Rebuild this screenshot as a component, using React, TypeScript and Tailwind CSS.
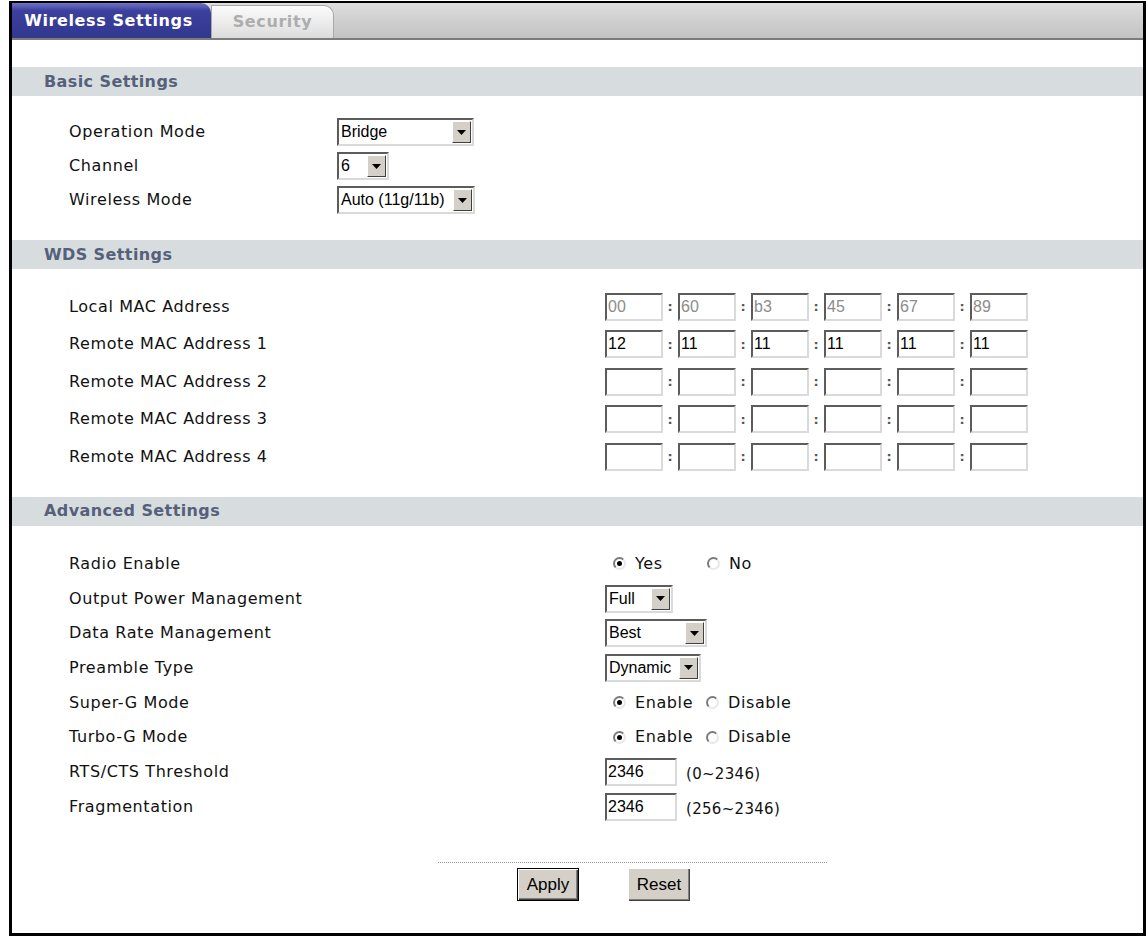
import React from "react";

const verdana = "font-['DejaVu_Sans',Verdana,sans-serif]";
const arial = "font-['Liberation_Sans',Arial,sans-serif]";

function Select({ value, className }: { value: string; className: string }) {
  return (
    <div
      className={`flex h-[28px] border-2 border-t-[#5c5c5c] border-l-[#5c5c5c] border-b-[#dadada] border-r-[#dadada] bg-white ${className}`}
    >
      <span className={`flex-1 pl-[2px] text-[16px] leading-[24px] tracking-normal text-black ${arial}`}>{value}</span>
      <span className="my-[1px] mr-[1px] flex w-[19px] items-center justify-center border border-t-white border-l-white border-b-[#404040] border-r-[#404040] bg-[#d4d0c8]">
        <svg width="9" height="5" viewBox="0 0 9 5">
          <path d="M0 0h9L4.5 5z" fill="#000" />
        </svg>
      </span>
    </div>
  );
}

function TextBox({ value = "", muted = false, className }: { value?: string; muted?: boolean; className: string }) {
  return (
    <div
      className={`h-[28px] border-2 border-t-[#5c5c5c] border-l-[#5c5c5c] border-b-[#dadada] border-r-[#dadada] bg-white pl-[1px] text-[16px] leading-[24px] tracking-normal ${arial} ${
        muted ? "text-[#8c8c8c]" : "text-black"
      } ${className}`}
    >
      {value}
    </div>
  );
}

function Radio({ checked }: { checked?: boolean }) {
  return (
    <span className="flex h-[13px] w-[13px] shrink-0 items-center justify-center rounded-full border-2 border-t-[#7a7a7a] border-l-[#7a7a7a] border-b-[#e8e8e8] border-r-[#e8e8e8] bg-white">
      {checked && <span className="h-[5px] w-[5px] rounded-full bg-black" />}
    </span>
  );
}

function RadioOption({ label, checked, className = "" }: { label: string; checked?: boolean; className?: string }) {
  return (
    <span className={`flex items-center ${className}`}>
      <Radio checked={checked} />
      <span className="ml-[9px]">{label}</span>
    </span>
  );
}

function SectionHeader({ title }: { title: string }) {
  return (
    <div
      className={`flex h-[29px] items-center bg-[#d7dddf] pl-[32px] text-[16px] font-bold tracking-[0.4px] text-[#56607a] ${verdana}`}
    >
      {title}
    </div>
  );
}

function MacRow({ values = [], muted = false }: { values?: string[]; muted?: boolean }) {
  return (
    <div className="flex items-center">
      {[0, 1, 2, 3, 4, 5].map((i) => (
        <React.Fragment key={i}>
          {i > 0 && <span className={`w-[15px] text-center text-[13px] font-bold text-[#555] ${verdana}`}>:</span>}
          <TextBox value={values[i]} muted={muted} className="w-[58px]" />
        </React.Fragment>
      ))}
    </div>
  );
}

const macRows: { label: string; values?: string[]; muted?: boolean }[] = [
  { label: "Local MAC Address", values: ["00", "60", "b3", "45", "67", "89"], muted: true },
  { label: "Remote MAC Address 1", values: ["12", "11", "11", "11", "11", "11"] },
  { label: "Remote MAC Address 2" },
  { label: "Remote MAC Address 3" },
  { label: "Remote MAC Address 4" },
];

export default function App() {
  return (
    <div className={`h-[939px] w-[1148px] bg-white pl-[9px] pt-[1px] text-[16px] tracking-[0.6px] text-[#111] ${verdana}`}>
      <div className="flex h-[935px] w-[1137px] flex-col border-t-2 border-l-[3px] border-r-[3px] border-b-[3px] border-black">
        {/* tab strip */}
        <div className="flex h-[37px] items-end border-b-2 border-[#7c7c7c] bg-[linear-gradient(#dedede,#cfcfcf_50%,#c4c4c4)]">
          <div className="flex h-full w-[199px] items-center justify-center rounded-tr-[10px] bg-[linear-gradient(#7074c4,#3c409e_22%,#32378f)] pr-[6px] text-[16px] font-bold text-white">
            Wireless Settings
          </div>
          <div className="flex h-[33px] w-[123px] items-center justify-center rounded-tr-[10px] border border-b-0 border-[#a9a9a9] bg-[linear-gradient(#fbfbfb,#e9e9e9_60%,#dcdcdc)] text-[16px] font-bold text-[#adadad]">
            Security
          </div>
        </div>

        <div className="h-[27px]" />
        <SectionHeader title="Basic Settings" />
        <div className="pl-[57px] pt-[19px] pb-[23px]">
          <div className="flex h-[34px] items-center">
            <span className="w-[268px]">Operation Mode</span>
            <Select value="Bridge" className="w-[137px]" />
          </div>
          <div className="flex h-[34px] items-center">
            <span className="w-[268px]">Channel</span>
            <Select value="6" className="w-[52px]" />
          </div>
          <div className="flex h-[34px] items-center">
            <span className="w-[268px]">Wireless Mode</span>
            <Select value="Auto (11g/11b)" className="w-[138px]" />
          </div>
        </div>

        <SectionHeader title="WDS Settings" />
        <div className="pl-[57px] pt-[19px] pb-[21px]">
          {macRows.map((r) => (
            <div key={r.label} className="flex h-[37.5px] items-center">
              <span className="w-[536px]">{r.label}</span>
              <MacRow values={r.values} muted={r.muted} />
            </div>
          ))}
        </div>

        <SectionHeader title="Advanced Settings" />
        <div className="pl-[57px] pt-[21px]">
          <div className="flex h-[34.7px] items-center">
            <span className="w-[536px]">Radio Enable</span>
            <span className="flex pl-[8px]">
              <RadioOption label="Yes" checked className="w-[94px]" />
              <RadioOption label="No" />
            </span>
          </div>
          <div className="flex h-[34.7px] items-center">
            <span className="w-[536px]">Output Power Management</span>
            <Select value="Full" className="w-[68px]" />
          </div>
          <div className="flex h-[34.7px] items-center">
            <span className="w-[536px]">Data Rate Management</span>
            <Select value="Best" className="w-[102px]" />
          </div>
          <div className="flex h-[34.7px] items-center">
            <span className="w-[536px]">Preamble Type</span>
            <Select value="Dynamic" className="w-[96px]" />
          </div>
          <div className="flex h-[34.7px] items-center">
            <span className="w-[536px]">Super-G Mode</span>
            <span className="flex pl-[8px]">
              <RadioOption label="Enable" checked className="w-[93px]" />
              <RadioOption label="Disable" />
            </span>
          </div>
          <div className="flex h-[34.7px] items-center">
            <span className="w-[536px]">Turbo-G Mode</span>
            <span className="flex pl-[8px]">
              <RadioOption label="Enable" checked className="w-[93px]" />
              <RadioOption label="Disable" />
            </span>
          </div>
          <div className="flex h-[34.7px] items-center">
            <span className="w-[536px]">RTS/CTS Threshold</span>
            <TextBox value="2346" className="w-[72px]" />
            <span className="ml-[9px] mt-[5px] text-[15px] tracking-[0.3px]">(0~2346)</span>
          </div>
          <div className="flex h-[34.7px] items-center">
            <span className="w-[536px]">Fragmentation</span>
            <TextBox value="2346" className="w-[72px]" />
            <span className="ml-[9px] mt-[5px] text-[15px] tracking-[0.3px]">(256~2346)</span>
          </div>
        </div>

        {/* form buttons */}
        <div className="mt-[38px] pl-[426px]">
          <div className="w-[389px] border-t border-dotted border-[#9a9a9a]" />
          <div className={`mt-[5px] flex gap-[49px] pl-[79px] text-[17px] tracking-normal text-black ${arial}`}>
            <button className="h-[33px] w-[62px] border border-black bg-[#d4d0c8] shadow-[inset_1px_1px_0_#fff,inset_-1px_-1px_0_#404040,inset_-2px_-2px_0_#808080]">
              Apply
            </button>
            <button className="h-[33px] w-[62px] bg-[#d4d0c8] shadow-[inset_1px_1px_0_#fff,inset_-1px_-1px_0_#404040,inset_-2px_-2px_0_#808080]">
              Reset
            </button>
          </div>
        </div>
      </div>
    </div>
  );
}
